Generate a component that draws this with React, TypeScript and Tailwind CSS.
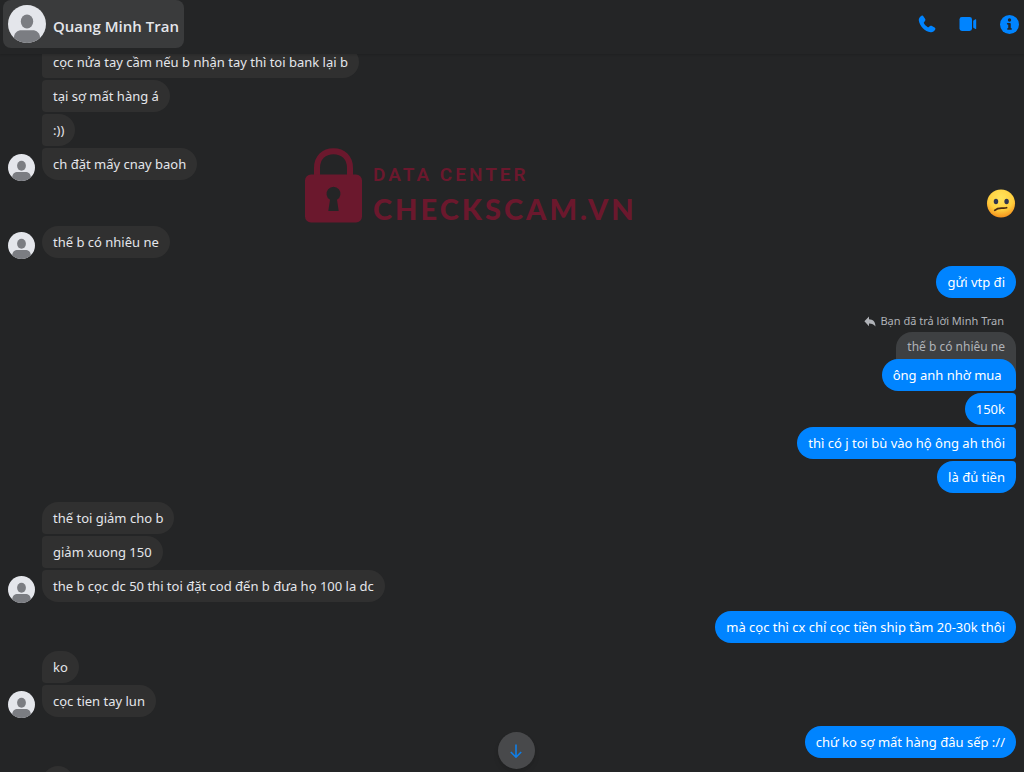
import React from "react";
import clsx from "clsx";

interface Message {
  id: string;
  text: string;
}

interface MessageGroup {
  id: string;
  from: "me" | "them";
  messages: Message[];
  emoji?: boolean;
  replyTo?: { label: string; quote: string };
  // group carries on above or below the visible part
  continued?: boolean;
  unfinished?: boolean;
}

const groups: MessageGroup[] = [
  {
    id: "g1",
    from: "them",
    continued: true,
    messages: [
      { id: "m1", text: "cọc nửa tay cầm nếu b nhận tay thì toi bank lại b" },
      { id: "m2", text: "tại sợ mất hàng á" },
      { id: "m3", text: ":))" },
      { id: "m4", text: "ch đặt mấy cnay baoh" },
    ],
  },
  { id: "g2", from: "me", emoji: true, messages: [] },
  {
    id: "g3",
    from: "them",
    messages: [{ id: "m5", text: "thế b có nhiêu ne" }],
  },
  { id: "g4", from: "me", messages: [{ id: "m6", text: "gửi vtp đi" }] },
  {
    id: "g5",
    from: "me",
    replyTo: { label: "Bạn đã trả lời Minh Tran", quote: "thế b có nhiêu ne" },
    messages: [
      { id: "m7", text: "ông anh nhờ mua " },
      { id: "m8", text: "150k" },
      { id: "m9", text: "thì có j toi bù vào hộ ông ah thôi" },
      { id: "m10", text: "là đủ tiền" },
    ],
  },
  {
    id: "g6",
    from: "them",
    messages: [
      { id: "m11", text: "thế toi giảm cho b" },
      { id: "m12", text: "giảm xuong 150" },
      {
        id: "m13",
        text: "the b cọc dc 50 thi toi đặt cod đến b đưa họ 100 la dc",
      },
    ],
  },
  {
    id: "g7",
    from: "me",
    messages: [
      { id: "m14", text: "mà cọc thì cx chỉ cọc tiền ship tầm 20-30k thôi" },
    ],
  },
  {
    id: "g8",
    from: "them",
    messages: [
      { id: "m15", text: "ko" },
      { id: "m16", text: "cọc tien tay lun" },
    ],
  },
  {
    id: "g9",
    from: "me",
    messages: [{ id: "m17", text: "chứ ko sợ mất hàng đâu sếp ://" }],
  },
  {
    id: "g10",
    from: "them",
    unfinished: true,
    messages: [{ id: "m18", text: "" }],
  },
];

const Avatar: React.FC<{ className?: string }> = ({ className }) => (
  <svg
    viewBox="0 0 38 38"
    className={clsx("shrink-0 rounded-full", className)}
    aria-hidden="true"
  >
    <rect width="38" height="38" fill="#e4e6eb" />
    <ellipse cx="19" cy="16.500" rx="6.200" ry="7" fill="#7b7d82" />
    <path
      d="M6 38v-5.500C6 28 9.500 25.300 13.500 25.300h11c4 0 7.500 2.700 7.500 7.200V38z"
      fill="#7b7d82"
    />
  </svg>
);

const ConfusedFace: React.FC = () => (
  <svg viewBox="0 0 30 30" className="h-[29px] w-[30px]" role="img" aria-label="confused face">
    <defs>
      <radialGradient id="face" cx="0.5" cy="0.3" r="0.72">
        <stop offset="0" stopColor="#ffe45c" />
        <stop offset="0.6" stopColor="#ffd03f" />
        <stop offset="1" stopColor="#f58d1a" />
      </radialGradient>
    </defs>
    <circle cx="15" cy="15" r="14.500" fill="url(#face)" />
    <ellipse cx="9.800" cy="13" rx="2.300" ry="2.800" fill="#2f3550" />
    <ellipse cx="20.800" cy="13" rx="2.300" ry="2.800" fill="#2f3550" />
    <path
      d="M8.500 22c2.500-2.300 5.500-2.400 8-2.300 1.800.1 3.200 0 4.300-.3"
      fill="none"
      stroke="#4a2a12"
      strokeWidth="1.800"
      strokeLinecap="round"
    />
  </svg>
);

const Header: React.FC = () => (
  <header className="relative z-10 flex h-[54px] shrink-0 items-start justify-between bg-[#242526] pl-[3px] pr-[5px] shadow-[0_1px_2px_rgba(0,0,0,0.15)]">
    <button
      type="button"
      className="flex h-12 items-center gap-[7px] rounded-lg bg-[#3a3b3c] px-[5px]"
    >
      <Avatar className="h-[38px] w-[38px]" />
      <span className="pt-1 font-['Open_Sans'] text-[15px] font-semibold text-[#e4e6eb]">
        Quang Minh Tran
      </span>
    </button>

    <div className="flex h-12 items-center gap-[23px] text-[#0084ff]">
      <button type="button" aria-label="Call">
        <svg viewBox="0 0 18 18" className="h-[18px] w-[18px]" fill="currentColor">
          <path d="M3.300.9C4.300.3 5 .6 5.500 1.400l1.700 2.700c.4.700.3 1.400-.2 2L6 7.300c-.3.300-.3.600-.1 1 1 1.700 2.200 2.900 3.900 3.900.4.200.7.200 1-.1l1.200-1c.6-.5 1.300-.6 2-.2l2.600 1.700c.8.500 1.100 1.200.5 2.200-1 1.700-2.500 2.700-4.500 2.400C7 16.400 1.600 11 .8 5.400.6 3.400 1.600 1.900 3.300.9z" />
        </svg>
      </button>
      <button type="button" aria-label="Video call">
        <svg viewBox="0 0 18 18" className="h-[18px] w-[18px]" fill="currentColor">
          <rect x="0.500" y="2" width="12.500" height="14" rx="2.400" />
          <path d="M14.200 5.700 16.300 4.300c.5-.3.900 0 .9.500v8.600c0 .5-.4.800-.9.500l-2.100-1.400z" />
        </svg>
      </button>
      <button type="button" aria-label="Conversation information">
        <svg viewBox="0 0 18 18" className="h-[19px] w-[19px]">
          <circle cx="9" cy="9" r="9" fill="currentColor" />
          <circle cx="9" cy="4.700" r="1.600" fill="#242526" />
          <path
            d="M7.300 7.500h2a.9.9 0 0 1 .9.900v4h.2a.8.8 0 0 1 0 1.600H7.600a.8.8 0 0 1 0-1.600h.2V9.100h-.5a.8.8 0 0 1 0-1.600z"
            fill="#242526"
          />
        </svg>
      </button>
    </div>
  </header>
);

const Watermark: React.FC = () => (
  <div className="pointer-events-none absolute left-[305px] top-[94px] flex gap-[11px] whitespace-nowrap text-[#6b182d]">
    <svg viewBox="0 0 57 75" className="h-[75px] w-[57px]">
      <path
        d="M12 30V20C12 9.500 19 3.200 28.500 3.200S45 9.500 45 20v10"
        fill="none"
        stroke="currentColor"
        strokeWidth="6"
      />
      <path
        fill="currentColor"
        fillRule="evenodd"
        d="M6 26.500h45a6 6 0 0 1 6 6v36a6 6 0 0 1-6 6H6a6 6 0 0 1-6-6V32.500a6 6 0 0 1 6-6zM25 51.800 23.300 63h10.400L32 51.800a7 7 0 1 0-7 0z"
      />
    </svg>
    <div className="pt-[15px]">
      <div className="font-[Roboto] text-[19px] leading-6 font-semibold tracking-[3px]">
        DATA CENTER
      </div>
      <div className="pt-[6px] font-[Lato] text-[29px] leading-8 font-black tracking-[3px]">
        CHECKSCAM.VN
      </div>
    </div>
  </div>
);

const Bubble: React.FC<{
  mine: boolean;
  text: string;
  joinTop: boolean;
  joinBottom: boolean;
}> = ({ mine, text, joinTop, joinBottom }) => (
  <div
    className={clsx(
      "relative flex h-8 min-w-8 items-center whitespace-pre rounded-2xl px-[11px] pt-[2px] text-[13px]",
      mine ? "bg-[#0084ff] text-white" : "bg-[#303030] text-[#e4e6eb]",
      joinTop && (mine ? "rounded-tr-[4px]" : "rounded-tl-[4px]"),
      joinBottom && (mine ? "rounded-br-[4px]" : "rounded-bl-[4px]")
    )}
  >
    {text}
  </div>
);

const Group: React.FC<{ group: MessageGroup }> = ({ group }) => {
  const mine = group.from === "me";
  const last = group.messages.length - 1;

  return (
    <li
      className={clsx(
        "flex items-end",
        mine ? "justify-end" : "gap-[7px]",
        last > 0 && "pb-px"
      )}
    >
      {!mine && (
        <Avatar
          className={clsx(
            "-mb-px h-[27px] w-[27px]",
            group.unfinished && "invisible"
          )}
        />
      )}
      <div
        className={clsx("flex flex-col", mine ? "items-end" : "items-start")}
      >
        {group.emoji && <ConfusedFace />}
        {group.replyTo && (
          <>
            <div className="flex h-[26px] items-center gap-1 pr-3 pt-1 text-[11px] text-[#b0b3b8]">
              <svg viewBox="0 0 12 11" className="h-[11px] w-3" fill="currentColor">
                <path d="M5 .5v2.800c4 .2 6.300 2.200 6.500 7.200C10 8.400 8 7.500 5 7.500v2.700L.4 5.300z" />
              </svg>
              {group.replyTo.label}
            </div>
            <div className="-mb-4 h-[43px] rounded-t-2xl bg-[#3e4042] px-[11px] pt-[6px] text-[12px] leading-[18px] text-[#b0b3b8]">
              {group.replyTo.quote}
            </div>
          </>
        )}
        <div
          className={clsx(
            "flex flex-col gap-[2px]",
            mine ? "items-end" : "items-start"
          )}
        >
          {group.messages.map((message, index) => (
            <Bubble
              key={message.id}
              mine={mine}
              text={message.text}
              joinTop={index > 0 || !!group.continued}
              joinBottom={index < last || !!group.unfinished}
            />
          ))}
        </div>
      </div>
    </li>
  );
};

const App: React.FC = () => {
  return (
    <div className="flex h-screen flex-col overflow-hidden bg-[#242526] font-['Noto_Sans',sans-serif]">
      <Header />

      <main className="relative min-h-0 flex-1 overflow-hidden">
        <ul className="-mt-2 flex flex-col gap-2 px-2">
          {groups.map((group) => (
            <Group key={group.id} group={group} />
          ))}
        </ul>

        <Watermark />

        {/* Jump to latest */}
        <div className="pointer-events-none absolute inset-x-0 bottom-[3px] flex justify-center pl-2">
          <button
            type="button"
            aria-label="Scroll to bottom"
            className="pointer-events-auto flex h-[37px] w-[37px] items-center justify-center rounded-full bg-[#48494b] text-[#0f7fe8] shadow-md"
          >
            <svg
              viewBox="0 0 14 16"
              className="h-4 w-[14px]"
              fill="none"
              stroke="currentColor"
              strokeWidth="1.600"
            >
              <path d="M7 1.500v12.500M1.800 9 7 14.200 12.200 9" />
            </svg>
          </button>
        </div>
      </main>
    </div>
  );
};

export default App;
